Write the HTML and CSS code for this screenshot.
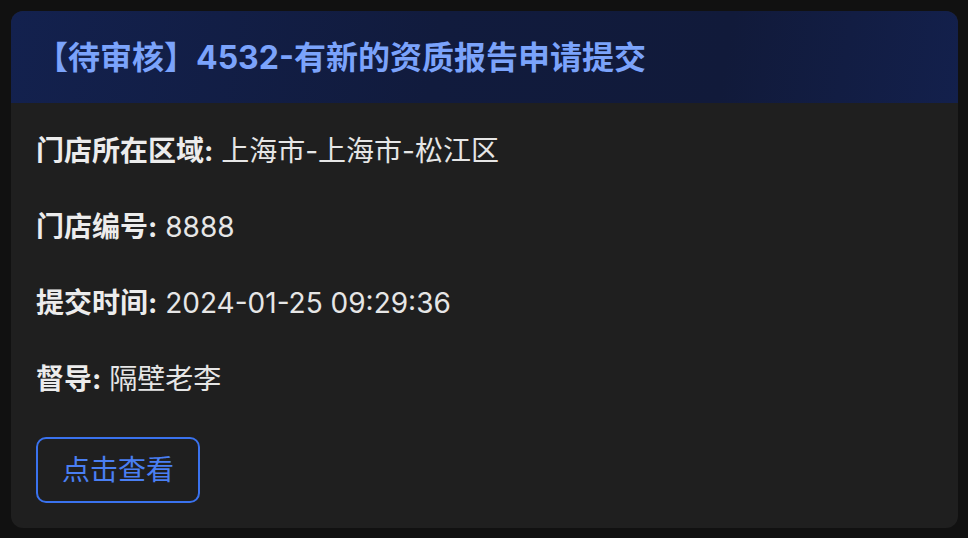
FILE: index.html
```html
<!DOCTYPE html>
<html lang="zh-CN">
<head>
<meta charset="utf-8">
<title>待审核</title>
<link rel="stylesheet" href="styles.css">
</head>
<body>
<div class="card">
  <div class="card-header">
    <h1 class="title">【待审核】4532-有新的资质报告申请提交</h1>
  </div>
  <div class="card-body">
    <p class="row"><span class="label">门店所在区域:</span> 上海市-上海市-松江区</p>
    <p class="row"><span class="label">门店编号:</span> 8888</p>
    <p class="row"><span class="label">提交时间:</span> 2024-01-25 09:29:36</p>
    <p class="row"><span class="label">督导:</span> 隔壁老李</p>
    <div class="actions">
      <button class="btn">点击查看</button>
    </div>
  </div>
</div>
</body>
</html>
```
FILE: styles.css
```css
html, body {
  margin: 0;
  padding: 0;
  background: #111111;
}
body {
  padding: 11px 10px 10px 11px;
  font-family: Inter, "Noto Sans CJK SC", sans-serif;
}
.card {
  background: #1f1f1f;
  border-radius: 12px;
  overflow: hidden;
  height: 517px;
  box-sizing: border-box;
}
.card-header {
  height: 92px;
  display: flex;
  align-items: center;
  padding-left: 25px;
  background: linear-gradient(100deg, #13214e 0%, #111b3d 45%, #111a3a 75%, #13204c 100%);
}
.title {
  margin: 0;
  font-size: 32px;
  font-weight: 700;
  color: #7ba3fb;
  line-height: 1;
  padding-top: 2px;
}
.card-body {
  padding: 30px 27px 26px 25px;
}
.row {
  margin: 0 0 40px 0;
  font-size: 28px;
  line-height: 36px;
  color: #e6e6e6;
}
.row:last-of-type {
  margin-bottom: 40px;
}
.label {
  font-weight: 700;
  color: #ececec;
}
.actions {
  display: flex;
}
.btn {
  height: 66px;
  padding: 0 24px;
  background: transparent;
  border: 2px solid #3a72ee;
  border-radius: 10px;
  color: #4a7ff3;
  font-family: Inter, "Noto Sans CJK SC", sans-serif;
  font-size: 28px;
  line-height: 1;
}
```
